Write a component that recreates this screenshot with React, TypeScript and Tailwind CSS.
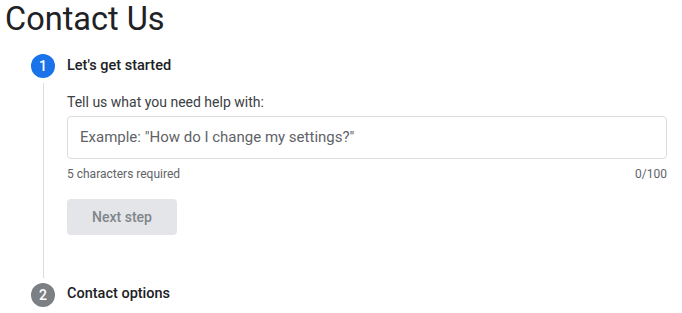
import React from "react";

function StepBadge({ n, active }: { n: number; active?: boolean }) {
  return (
    <div
      className={
        "flex h-6 w-6 items-center justify-center rounded-full text-[14px] font-medium text-white " +
        (active ? "bg-[#1a73e8]" : "bg-[#7c7f84]")
      }
    >
      {n}
    </div>
  );
}

export default function App() {
  return (
    <div className="min-h-[313px] bg-white font-['Roboto',sans-serif] text-[#202124]">
      {/* Title */}
      <h1 className="pl-[5px] text-[32.5px] leading-[38px] text-[#202124]">Contact Us</h1>

      {/* Stepper */}
      <div className="mt-[16px] grid grid-cols-[24px_1fr] gap-x-3 pl-[31px] pr-[15px]">
        {/* Step 1 */}
        <StepBadge n={1} active />
        <div className="flex items-center text-[14.5px] font-medium">Let's get started</div>

        <div className="flex justify-center py-[5px]">
          <div className="w-px bg-[#dadce0]" />
        </div>
        <div className="pb-[48px] pt-[14px]">
          <p className="text-[14px] leading-5 text-[#3c4043]">Tell us what you need help with:</p>
          <div className="mt-1 flex h-[43px] items-center rounded-[4px] border border-[#dadce0] px-3">
            <span className="text-[15px] text-[#5f6368]">Example: "How do I change my settings?"</span>
          </div>
          <div className="mt-[7px] flex justify-between text-[12px] leading-4 text-[#5f6368]">
            <span>5 characters required</span>
            <span>0/100</span>
          </div>
          <button
            type="button"
            className="mt-[17px] h-9 w-[110px] rounded-[4px] bg-[#e4e5e8] text-[14px] font-medium text-[#80868b]"
          >
            Next step
          </button>
        </div>

        {/* Step 2 */}
        <StepBadge n={2} />
        <div className="-mt-[2px] flex items-center text-[14.5px] font-medium">Contact options</div>
      </div>
    </div>
  );
}
